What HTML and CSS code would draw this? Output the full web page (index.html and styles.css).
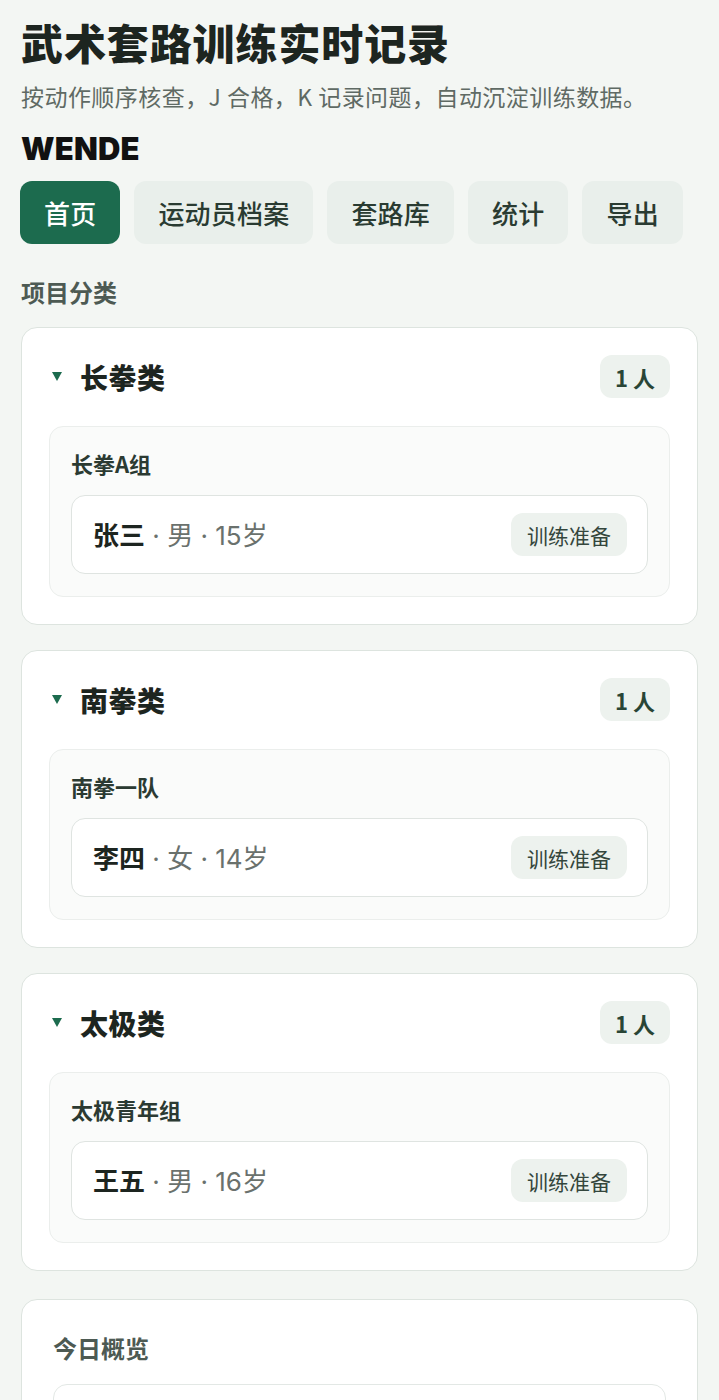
FILE: index.html
```html
<!DOCTYPE html>
<html lang="zh-CN">
<head>
<meta charset="utf-8">
<title>武术套路训练实时记录</title>
<link rel="stylesheet" href="styles.css">
</head>
<body>
<div class="page">
  <header class="head">
    <h1 class="title">武术套路训练实时记录</h1>
    <p class="subtitle">按动作顺序核查，J 合格，K 记录问题，自动沉淀训练数据。</p>
    <div class="brand">WENDE</div>
    <nav class="nav">
      <a class="nav-btn active">首页</a>
      <a class="nav-btn">运动员档案</a>
      <a class="nav-btn">套路库</a>
      <a class="nav-btn">统计</a>
      <a class="nav-btn">导出</a>
    </nav>
  </header>

  <h2 class="section-title">项目分类</h2>

  <section class="card">
    <div class="card-head">
      <span class="caret"></span>
      <span class="cat-name">长拳类</span>
      <span class="count">1 人</span>
    </div>
    <div class="group">
      <div class="group-name">长拳A组</div>
      <div class="athlete">
        <div class="who"><b class="name">张三</b><span class="meta"> · 男 · 15岁</span></div>
        <span class="status">训练准备</span>
      </div>
    </div>
  </section>

  <section class="card">
    <div class="card-head">
      <span class="caret"></span>
      <span class="cat-name">南拳类</span>
      <span class="count">1 人</span>
    </div>
    <div class="group">
      <div class="group-name">南拳一队</div>
      <div class="athlete">
        <div class="who"><b class="name">李四</b><span class="meta"> · 女 · 14岁</span></div>
        <span class="status">训练准备</span>
      </div>
    </div>
  </section>

  <section class="card">
    <div class="card-head">
      <span class="caret"></span>
      <span class="cat-name">太极类</span>
      <span class="count">1 人</span>
    </div>
    <div class="group">
      <div class="group-name">太极青年组</div>
      <div class="athlete">
        <div class="who"><b class="name">王五</b><span class="meta"> · 男 · 16岁</span></div>
        <span class="status">训练准备</span>
      </div>
    </div>
  </section>

  <section class="card overview">
    <h3 class="overview-title">今日概览</h3>
    <div class="overview-box"></div>
  </section>
</div>
</body>
</html>
```

FILE: styles.css
```css
* { box-sizing: border-box; }
html, body { margin: 0; padding: 0; }
body {
  background: #f3f6f3;
  font-family: "Noto Sans CJK SC", "Noto Sans", sans-serif;
  color: #1e2721;
}
.page {
  padding: 16px 21px 40px;
}
.title {
  margin: 0;
  font-size: 42px;
  line-height: 52px;
  font-weight: 900;
  color: #1d2520;
  letter-spacing: 0.9px;
}
.subtitle {
  margin: 12px 0 0;
  font-size: 23px;
  line-height: 32px;
  color: #5f6a64;
  letter-spacing: 0.45px;
}
.brand {
  margin-top: 18px;
  font-family: Inter, "Liberation Sans", sans-serif;
  font-weight: 900;
  font-size: 31px;
  line-height: 37px;
  letter-spacing: 0.2px;
  color: #111;
}
.nav {
  display: flex;
  gap: 14px;
  margin-top: 14px;
  margin-left: -1px;
}
.nav-btn {
  display: flex;
  align-items: center;
  height: 63px;
  padding: 0 24px;
  border-radius: 12px;
  background: #e9efeb;
  color: #2a3b32;
  font-size: 26px;
  font-weight: 500;
  letter-spacing: 0.2px;
}
.nav-btn.active {
  background: #1c6b4e;
  color: #fff;
}
.section-title {
  margin: 31px 0 18px;
  font-size: 24px;
  line-height: 34px;
  font-weight: 700;
  color: #4d5a53;
}
.card {
  background: #fff;
  border: 1px solid #dde4df;
  border-radius: 16px;
  padding: 27px;
  margin-bottom: 25px;
}
.card-head {
  display: flex;
  align-items: center;
  height: 43px;
}
.caret {
  width: 0;
  height: 0;
  border-left: 5px solid transparent;
  border-right: 5px solid transparent;
  border-top: 9px solid #1c6b4e;
  margin-left: 3px;
  margin-right: 18px;
}
.cat-name {
  font-size: 28px;
  font-weight: 900;
  color: #1d2520;
  flex: 1;
  letter-spacing: 0.5px;
}
.count {
  background: #edf2ee;
  border-radius: 12px;
  height: 43px;
  padding: 0 15px;
  display: flex;
  align-items: center;
  font-size: 22px;
  font-weight: 700;
  color: #294536;
}
.group {
  margin-top: 28px;
  background: #fafbfa;
  border: 1px solid #ebeeec;
  border-radius: 14px;
  padding: 21px 21px 22px;
}
.group-name {
  font-size: 22px;
  line-height: 31px;
  font-weight: 700;
  color: #2b3a32;
}
.athlete {
  margin-top: 16px;
  background: #fff;
  border: 1px solid #dfe4e1;
  border-radius: 14px;
  padding: 17px 20px 17px 21px;
  display: flex;
  align-items: center;
  justify-content: space-between;
}
.who {
  font-size: 26px;
  line-height: 34px;
}
.name {
  font-size: 26px;
  font-weight: 700;
  color: #1d2520;
}
.meta {
  font-family: Inter, "Noto Sans CJK SC", sans-serif;
  color: #6a716d;
}
.status {
  background: #edf2ee;
  border-radius: 12px;
  height: 43px;
  padding: 0 16px;
  display: flex;
  align-items: center;
  font-size: 21px;
  color: #34463c;
}
.overview {
  margin-top: 28px;
  padding: 31px;
}
.overview-title {
  margin: 0;
  font-size: 24px;
  line-height: 34px;
  font-weight: 700;
  color: #4d5a53;
}
.overview-box {
  margin-top: 19px;
  height: 120px;
  border: 1px solid #e3e8e5;
  border-radius: 14px;
}
```
